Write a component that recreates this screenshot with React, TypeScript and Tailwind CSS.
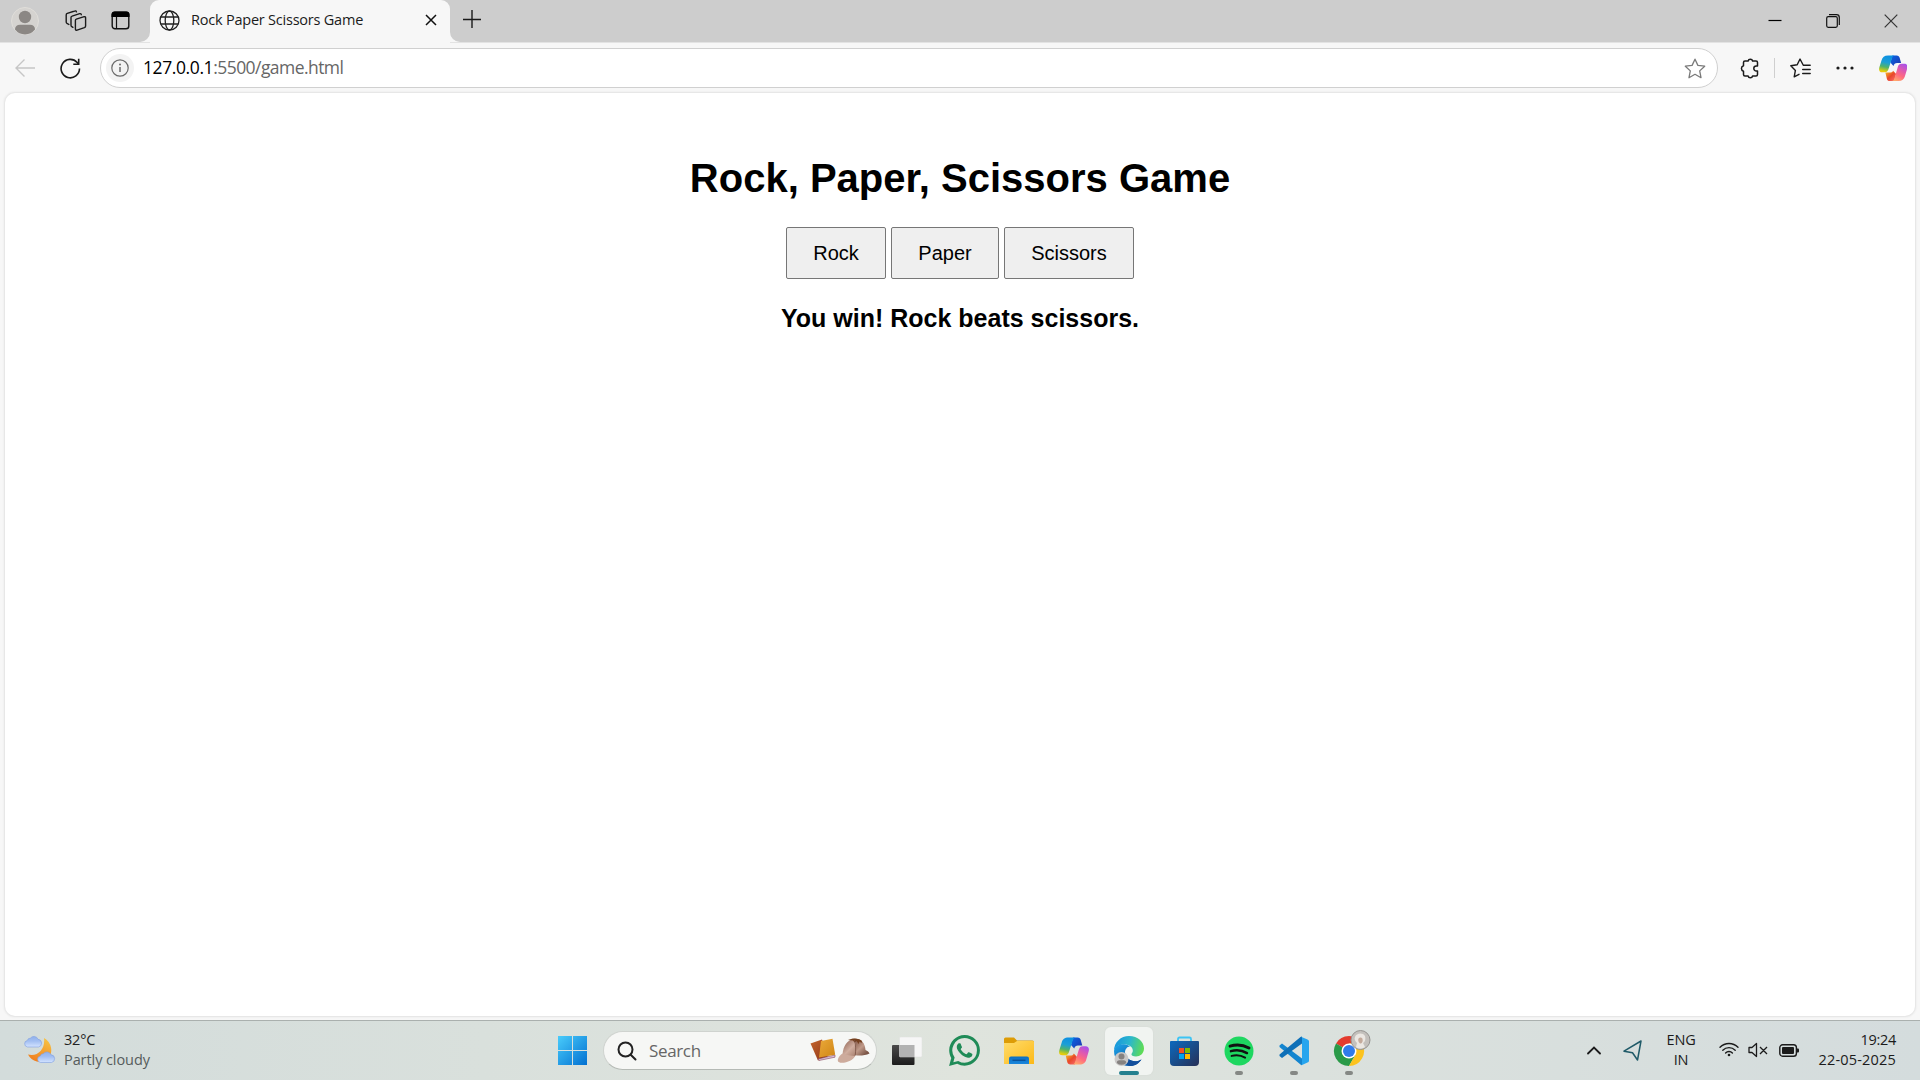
import React from "react";

const ui = "font-['Open_Sans','Noto_Sans',sans-serif]";

function CopilotLogo({ id, size }: { id: string; size: number }) {
  return (
    <svg width={size} height={size} viewBox="0 0 30 30" fill="none" className="shrink-0">
      <defs>
        <linearGradient id={id + "a"} x1="8" y1="2" x2="4" y2="21" gradientUnits="userSpaceOnUse">
          <stop stopColor="#0d91e1" />
          <stop offset=".35" stopColor="#1c9fd6" />
          <stop offset=".6" stopColor="#4fb36c" />
          <stop offset=".85" stopColor="#e5cf0a" />
          <stop offset="1" stopColor="#fbb41c" />
        </linearGradient>
        <linearGradient id={id + "b"} x1="26" y1="9" x2="16" y2="28" gradientUnits="userSpaceOnUse">
          <stop stopColor="#a050f0" />
          <stop offset=".35" stopColor="#dc58b4" />
          <stop offset=".65" stopColor="#ff6a80" />
          <stop offset="1" stopColor="#ffad6a" />
        </linearGradient>
        <linearGradient id={id + "c"} x1="14" y1="2" x2="22" y2="9" gradientUnits="userSpaceOnUse">
          <stop stopColor="#0b60e0" />
          <stop offset="1" stopColor="#1c41b8" />
        </linearGradient>
        <linearGradient id={id + "d"} x1="8" y1="20" x2="15" y2="28" gradientUnits="userSpaceOnUse">
          <stop stopColor="#f7a022" />
          <stop offset=".5" stopColor="#e8482c" />
          <stop offset="1" stopColor="#f5635c" />
        </linearGradient>
      </defs>
      <path d="M14 1.500h4.500c2 0 2.800 1 3.300 2.800L23.300 9.500H19c-2 0-3.200 1.200-3.800 3L12 9z" fill={`url(#${id}c)`} />
      <path d="M16 28.500h-4.500c-2 0-2.800-1-3.300-2.800L6.700 19.500H11c2 0 3.200-.2 3.800-2L18 21z" fill={`url(#${id}d)`} />
      <path d="M9.500 1.500h7c-1.600 0-2.300 1.300-2.900 3.200L10.300 15c-.9 3-1.800 4.300-4.300 4.300H3.500C.5 19.300-.4 17.300.3 14.200L2.700 6.500C3.700 3.200 5.500 1.500 9.500 1.500z" fill={`url(#${id}a)`} />
      <path d="M20.500 28.500h-7c1.600 0 2.300-1.300 2.900-3.200L19.700 14c.9-3 1.800-3.800 4.300-3.800h2.500c3 0 3.900 2 3.200 5.100L27.300 23.500c-1 3.300-2.800 5-6.800 5z" fill={`url(#${id}b)`} />
    </svg>
  );
}

function Avatar() {
  return (
    <svg width="28" height="28" viewBox="0 0 28 28" className="shrink-0">
      <circle cx="14" cy="14" r="13.500" fill="#d5d3d0" stroke="#e0deda" />
      <circle cx="14" cy="10" r="6.200" fill="#8b8784" />
      <path d="M4 22.500C4 19.500 6 17.700 9 17.700h10c3 0 5 1.800 5 4.800A13.500 13.500 0 0 1 14 27.500 13.500 13.500 0 0 1 4 22.500z" fill="#8b8784" />
    </svg>
  );
}

function TabStrip() {
  return (
    <header className="flex h-[43px] shrink-0 border-b border-[#e3e3e3] bg-[#cdcdcd]">
      <div className="flex h-[41px] w-[150px] shrink-0 items-center pl-[11px]">
        <Avatar />
        <svg width="22" height="22" viewBox="0 0 22 22" fill="none" stroke="#1b1b1b" strokeWidth="1.400" strokeLinejoin="round" strokeLinecap="round" className="ml-[25.500px] shrink-0">
          <path d="M11.300 9.200 19.200 6.700c.8-.2 1.400.2 1.400 1v8.400c0 .8-.4 1.300-1.200 1.600l-7.300 2.400c-1 .3-1.700-.1-1.700-1V10.600c0-.7.300-1.200.9-1.400z" />
          <path d="M7.900 17.300 6.800 16.600c-.5-.3-.8-.8-.8-1.400V7.600c0-.8.400-1.300 1.100-1.500l7.600-2.400c.9-.3 1.500.1 1.600 1" />
          <path d="M3.900 14.500 2 13.300c-.6-.4-.8-.8-.8-1.400V4.900c0-.8.4-1.200 1.100-1.500L9.700 1c.8-.3 1.500 0 1.700.8" />
        </svg>
        <svg width="19" height="19" viewBox="0 0 19 19" fill="none" className="ml-[24px] shrink-0">
          <rect x="1.200" y="1.200" width="16.600" height="16.600" rx="2.800" stroke="#111" strokeWidth="1.400" />
          <path d="M.5 6V3.500a3 3 0 0 1 3-3h12a3 3 0 0 1 3 3V6z" fill="#000" />
          <path d="M5.500 6v11.500" stroke="#111" strokeWidth="1.200" />
        </svg>
      </div>
      <div className="relative flex h-[43px] w-[300px] shrink-0 items-center rounded-t-[9px] bg-[#f7f7f7] pb-[3px] pl-[9px] pr-[13px]">
        <svg width="10" height="10" viewBox="0 0 10 10" className="absolute -left-[10px] bottom-px">
          <path d="M10 0v10H0A10 10 0 0 0 10 0z" fill="#f7f7f7" />
        </svg>
        <svg width="10" height="10" viewBox="0 0 10 10" className="absolute -right-[10px] bottom-px">
          <path d="M0 0v10h10A10 10 0 0 1 0 0z" fill="#f7f7f7" />
        </svg>
        <svg width="21" height="21" viewBox="0 0 21 21" fill="none" stroke="#222" strokeWidth="1.300" className="shrink-0">
          <circle cx="10.500" cy="10.500" r="9.500" />
          <ellipse cx="10.500" cy="10.500" rx="4.300" ry="9.500" />
          <path d="M1.700 7h17.600M1.700 14h17.600" />
        </svg>
        <span className="ml-[11px] flex-1 whitespace-nowrap text-[14.500px] leading-5 tracking-[-0.220px] text-[#1b1b1b]">Rock Paper Scissors Game</span>
        <svg width="12" height="12" viewBox="0 0 12 12" stroke="#111" strokeWidth="1.500" className="shrink-0">
          <path d="M1 1l10 10M11 1 1 11" />
        </svg>
      </div>
      <svg width="18" height="18" viewBox="0 0 18 18" stroke="#1b1b1b" strokeWidth="1.400" className="ml-[13px] mt-[10px] shrink-0">
        <path d="M9 0v18M0 9.500h18" />
      </svg>
      <div className="ml-auto flex h-[42px] items-center">
        <svg width="14" height="14" viewBox="0 0 14 14" className="mr-[44px]"><path d="M.5 6.500h13" stroke="#000" strokeWidth="1.200" /></svg>
        <svg width="14" height="14" viewBox="0 0 14 14" fill="none" stroke="#111" strokeWidth="1.200" className="mr-[44px]">
          <rect x=".7" y="2.700" width="10.600" height="10.600" rx="1.500" />
          <path d="M3 .7h7.500a2.800 2.800 0 0 1 2.800 2.800V11" />
        </svg>
        <svg width="14" height="14" viewBox="0 0 14 14" stroke="#333" strokeWidth="1.200" className="mr-[22px]"><path d="M.7.7l12.600 12.600M13.300.7.7 13.300" /></svg>
      </div>
    </header>
  );
}

function Toolbar() {
  return (
    <div className="flex h-[50px] shrink-0 items-center pl-[15px]">
      <svg width="20" height="18" viewBox="0 0 20 18" fill="none" stroke="#c6c6c6" strokeWidth="1.400" className="mb-px"><path d="M20 9H1M9.500.5 1 9l8.500 8.500" /></svg>
      <svg width="21" height="21" viewBox="0 0 21 21" fill="none" stroke="#1b1b1b" strokeWidth="1.600" className="ml-[25px]">
        <path d="M19.500 10.500A9.200 9.200 0 1 1 17.200 4.500L18.500 6" />
        <path d="M18.700.8v5.400h-5.400" />
      </svg>
      <div className="ml-[19px] flex h-10 w-[1618px] shrink-0 items-center rounded-full border border-[#d0d0d0] bg-white pl-[5px] pr-[11px]">
        <div className="flex size-7 items-center justify-center rounded-full bg-[#f3f3f3]">
          <svg width="18" height="18" viewBox="0 0 18 18" fill="none" stroke="#6b6b6b" strokeWidth="1.200">
            <circle cx="9" cy="9" r="8.200" />
            <path d="M9 8v5" strokeWidth="1.500" />
            <circle cx="9" cy="5.400" r="1" fill="#6b6b6b" stroke="none" />
          </svg>
        </div>
        <span className="mb-[2px] ml-[9px] flex-1 whitespace-nowrap text-[17.500px] leading-6 tracking-[-0.560px] text-[#666]"><span className="tracking-[-0.400px] text-black">127.0.0.1</span>:5500/game.html</span>
        <svg width="22" height="21" viewBox="0 0 22 21" fill="none" stroke="#7a7a7a" strokeWidth="1.300" strokeLinejoin="round">
          <path d="M11 1.200l2.900 6.200 6.800.8-5 4.700 1.300 6.800-6-3.400-6 3.400 1.300-6.800-5-4.700 6.800-.8z" />
        </svg>
      </div>
      <svg width="20" height="21" viewBox="0 0 20 21" fill="none" stroke="#1b1b1b" strokeWidth="1.500" strokeLinejoin="round" className="ml-[21.500px]">
        <path d="M5 3h3.100a2.300 2.300 0 0 1 4.500 0H16a1.500 1.500 0 0 1 1.500 1.500V8h-1.200a2.500 2.500 0 0 0 0 5h1.200v3.500A1.500 1.500 0 0 1 16 18h-3.400a2.300 2.300 0 0 1-4.500 0H5a1.500 1.500 0 0 1-1.500-1.500v-3.300a2.800 2.800 0 0 1 0-5.400V4.500A1.500 1.500 0 0 1 5 3z" />
      </svg>
      <div className="ml-[14.500px] h-5 w-px bg-[#cfcfcf]" />
      <svg width="21" height="20" viewBox="0 0 21 20" fill="none" stroke="#1b1b1b" strokeWidth="1.400" strokeLinejoin="round" strokeLinecap="round" className="ml-[14.500px]">
        <path d="M13.300 7.300 10 1 7.200 6.800.8 7.700l4.600 4.700-1.200 6.400L9 16.300M13.300 7.300h6.900M12.700 11.500h7.500M12.700 15.500h7.500" />
      </svg>
      <svg width="18" height="4" viewBox="0 0 18 4" fill="#1b1b1b" className="ml-[25px]"><circle cx="2" cy="2" r="1.600" /><circle cx="9" cy="2" r="1.600" /><circle cx="16" cy="2" r="1.600" /></svg>
      <div className="ml-[25px]"><CopilotLogo id="tb" size={28.5} /></div>
    </div>
  );
}

function GameButton({ children }: { children: React.ReactNode }) {
  return <button className="h-[52px] rounded-[2px] border border-[#767676] bg-[#efefef] px-[26px] text-xl leading-[23px] text-black">{children}</button>;
}

function GamePage() {
  return (
    <main className="mx-[5px] flex h-[923px] shrink-0 flex-col items-center rounded-[10px] bg-white pt-[62px] font-['Liberation_Sans',Arial,sans-serif] text-black shadow-[0_0_2px_1px_#e2e2e2]">
      <h1 className="text-[40px] font-bold leading-[46px]">Rock, Paper, Scissors Game</h1>
      <div className="mt-[26px] flex gap-[5.500px]">
        <GameButton>Rock</GameButton>
        <GameButton>Paper</GameButton>
        <GameButton>Scissors</GameButton>
      </div>
      <p className="mt-[25px] text-[25px] font-bold leading-[28px]">You win! Rock beats scissors.</p>
    </main>
  );
}

const cloudPath = "M3.500 12a3.300 3.300 0 0 1-.2-6.500 3 3 0 0 1 3-2.300 4.500 4.500 0 0 1 7.800 1.100 3.900 3.900 0 0 1 .4 7.700z";

function Weather() {
  return (
    <div className="flex w-[300px] items-center pb-[2px] pl-[24px]">
      <svg width="32" height="30" viewBox="0 0 32 30">
        <defs>
          <linearGradient id="moon" x1="22" y1="3" x2="10" y2="28" gradientUnits="userSpaceOnUse"><stop stopColor="#f7c344" /><stop offset="1" stopColor="#ef7a1c" /></linearGradient>
          <linearGradient id="cloud" x1="0" y1="0" x2="0" y2="1"><stop stopColor="#8fb0ec" /><stop offset=".45" stopColor="#a3bff2" /><stop offset="1" stopColor="#d3e3ff" /></linearGradient>
        </defs>
        <path d="M20 3a14 14 0 0 1 3.800 21.500A13.500 13.500 0 0 1 4 19.500C14 22 21.500 14 20 3z" fill="url(#moon)" />
        <path d={cloudPath} fill="url(#cloud)" stroke="#7f9fe0" strokeWidth=".6" />
        <path d={cloudPath} fill="url(#cloud)" stroke="#7f9fe0" strokeWidth=".6" transform="translate(13 15.500)" />
      </svg>
      <div className="ml-[8px] whitespace-nowrap text-[14.500px] leading-5 tracking-[-0.200px]">
        <div className="text-[#222]">32°C</div>
        <div className="tracking-[-0.080px] text-[#565c5c]">Partly cloudy</div>
      </div>
    </div>
  );
}

function SearchBox() {
  return (
    <div className="ml-[16px] flex h-[39px] w-[274px] shrink-0 items-center rounded-full border border-[#cfd3cf] border-b-[#b5bab5] bg-[#f6f7f5] pl-[13px] pr-[5px]">
      <svg width="20" height="20" viewBox="0 0 20 20" fill="none" stroke="#222" strokeWidth="2" strokeLinecap="round"><circle cx="8.500" cy="8.500" r="7" /><path d="M13.700 13.700 18.500 18.500" /></svg>
      <span className="ml-[12px] flex-1 text-[17px] leading-6 tracking-[-0.350px] text-[#666]">Search</span>
      <svg width="61" height="28" viewBox="0 0 61 28">
        <defs>
          <linearGradient id="hatL" x1="34" y1="4" x2="48" y2="18" gradientUnits="userSpaceOnUse"><stop stopColor="#94695a" /><stop offset=".5" stopColor="#d0ae9f" /><stop offset="1" stopColor="#a47b6a" /></linearGradient>
          <linearGradient id="hatR" x1="46" y1="4" x2="57" y2="16" gradientUnits="userSpaceOnUse"><stop stopColor="#8b604f" /><stop offset=".5" stopColor="#bf9a89" /><stop offset="1" stopColor="#7b5546" /></linearGradient>
          <linearGradient id="bookA" x1="0" y1="0" x2="1" y2="1"><stop stopColor="#c4652c" /><stop offset="1" stopColor="#8d3517" /></linearGradient>
          <linearGradient id="bookB" x1="0" y1="0" x2="1" y2="1"><stop stopColor="#eba93a" /><stop offset="1" stopColor="#cf8515" /></linearGradient>
        </defs>
        <path d="M.5 6.500 12 2.500l6 17-10 4z" fill="url(#bookA)" />
        <path d="M8 22 25 18v2.200L9 23.500z" fill="#d7bfd6" stroke="#8a4a60" strokeWidth=".6" />
        <path d="M11 4 22.500 1.700l2.700 16L9 20.500z" fill="url(#bookB)" />
        <path d="M44 2C51 1 55 6 55.500 13c2 .8 3.500 2 4 3.500-4 1.800-9 2.500-14.500 1.800z" fill="url(#hatR)" />
        <path d="M32.500 17.500C33 9.500 37 2.500 44.500 1.700 46 7 46.500 13 45 19.500c-4 1-9 .5-12.500-2z" fill="url(#hatL)" />
        <path d="M38 3c4-2.300 11-2.300 14 1l-.5 2-2-1.500-.8 2.500-2.200-3-2 1.500-1.500-2z" fill="#75401f" />
        <path d="M32.500 16.500c4 1.800 8.500 2.300 12.500 2.500-1 3.500-8 7-13.500 6.800-3.500-.2-4.300-2-3.300-4.300.8-2 2.300-3.800 4.300-5z" fill="#cdab9c" />
        <path d="M44.500 3c1.300 5 1.500 11 .7 15.500" stroke="#775142" strokeWidth=".8" fill="none" />
      </svg>
    </div>
  );
}

function AppSlot({ children, active, running }: { children: React.ReactNode; active?: boolean; running?: boolean }) {
  return (
    <div className={"relative flex size-12 shrink-0 items-center justify-center rounded-md " + (active ? "bg-[#f1f4f1] shadow-[0_0_1px_1px_#dadfda]" : "")}>
      {children}
      {active && <span className="absolute bottom-0 left-[14px] h-1 w-5 rounded-full bg-[#24808f]" />}
      {running && <span className="absolute bottom-0 left-5 h-1 w-2 rounded-full bg-[#858885]" />}
    </div>
  );
}

function Apps() {
  return (
    <div className="ml-[7px] flex gap-[7px]">
      <div className="mr-[1px]">
        <AppSlot>
          <svg width="30" height="28" viewBox="0 0 30 28" className="mr-[2px]">
            <defs><linearGradient id="tv" x1="0" y1="0" x2="0" y2="1"><stop stopColor="#4a4a4a" /><stop offset="1" stopColor="#1c1c1c" /></linearGradient></defs>
            <rect x="0" y="8" width="22.500" height="20" rx="1" fill="url(#tv)" />
            <rect x="7.500" y="0" width="22.500" height="20" rx="1" fill="#f6f6f6" stroke="#dedede" strokeWidth=".5" />
            <path d="M7.500 8h15v12h-14a1 1 0 0 1-1-1z" fill="#b2b2b2" />
          </svg>
        </AppSlot>
      </div>
      <AppSlot>
        <svg width="31" height="31" viewBox="0 0 24 24" fill="#1f8b57">
          <path d="M17.472 14.382c-.297-.149-1.758-.867-2.030-.967-.273-.099-.471-.148-.670.150-.197.297-.767.966-.940 1.164-.173.199-.347.223-.644.075-.297-.150-1.255-.463-2.390-1.475-.883-.788-1.480-1.761-1.653-2.059-.173-.297-.018-.458.130-.606.134-.133.298-.347.446-.520.149-.174.198-.298.298-.497.099-.198.050-.371-.025-.520-.075-.149-.669-1.612-.916-2.207-.242-.579-.487-.500-.669-.510-.173-.008-.371-.010-.570-.010-.198 0-.520.074-.792.372-.272.297-1.040 1.016-1.040 2.479 0 1.462 1.065 2.875 1.213 3.074.149.198 2.096 3.200 5.077 4.487.709.306 1.262.489 1.694.625.712.227 1.360.195 1.871.118.571-.085 1.758-.719 2.006-1.413.248-.694.248-1.289.173-1.413-.074-.124-.272-.198-.570-.347z" />
          <path d="M12.050 0C5.495 0 .160 5.335.157 11.892c0 2.096.547 4.142 1.588 5.945L.057 24l6.305-1.654a11.882 11.882 0 0 0 5.683 1.448h.005c6.554 0 11.890-5.335 11.893-11.893A11.821 11.821 0 0 0 12.050 0zm0 2.300a9.600 9.600 0 0 1 9.600 9.600 9.600 9.600 0 0 1-14.500 8.200l-3.800 1 1-3.700A9.600 9.600 0 0 1 12.050 2.300z" fillRule="evenodd" />
        </svg>
      </AppSlot>
      <AppSlot>
        <svg width="30" height="27" viewBox="0 0 30 27">
          <defs>
            <linearGradient id="fold" x1="0" y1="0" x2="1" y2="1"><stop stopColor="#ffdc6b" /><stop offset="1" stopColor="#fcb918" /></linearGradient>
            <linearGradient id="pocket" x1="0" y1="0" x2="0" y2="1"><stop stopColor="#0b6fc2" /><stop offset="1" stopColor="#1a86dc" /></linearGradient>
          </defs>
          <path d="M0 2a1.500 1.500 0 0 1 1.500-1.500H10l3 3h15.500A1.500 1.500 0 0 1 30 5v4H0z" fill="#dd9c06" />
          <path d="M0 6h10l3-2h16a1 1 0 0 1 1 1v22H0z" fill="url(#fold)" />
          <path d="M5 27v-5.500a2 2 0 0 1 2-2h16a2 2 0 0 1 2 2V27z" fill="url(#pocket)" />
          <path d="M8.500 23.200h13" stroke="#08498f" strokeWidth="1.200" />
        </svg>
      </AppSlot>
      <AppSlot><CopilotLogo id="bar" size={30} /></AppSlot>
      <AppSlot active>
        <svg width="32" height="32" viewBox="0 0 32 32">
          <defs>
            <linearGradient id="eA" x1="2" y1="6" x2="30" y2="14" gradientUnits="userSpaceOnUse"><stop stopColor="#1796dd" /><stop offset=".5" stopColor="#2cb7cc" /><stop offset="1" stopColor="#5fdc55" /></linearGradient>
            <linearGradient id="eB" x1="4" y1="10" x2="18" y2="30" gradientUnits="userSpaceOnUse"><stop stopColor="#1c9fe4" /><stop offset="1" stopColor="#0b58a8" /></linearGradient>
          </defs>
          <path d="M1 16C1 7 8 1 16 1c9 0 15 6 15 12.500 0 5-4 8-8 8-3 0-5-1-4.500-2.500.5-1 1.300-1.700 1.300-3.500 0-3.500-3.800-6-8.300-6C6 9.500 2 12 1 16z" fill="url(#eA)" />
          <path d="M1 16c.5-4 4.500-7 9.500-6.800 3 .1 5 1 6.500 2.300-3 0-5 3-5 6 0 5 5 8.700 10 8.700 3 0 5-1 6.500-1.800C26 28 22 31 16 31 8 31 1 25 1 16z" fill="url(#eB)" />
          <path d="M12 17.500c0 5 5 8.700 10 8.700 3 0 5-1 6.500-1.800C26 28 22 31 17.500 31 11 30 8.500 22 12 17.500z" fill="#124f9b" />
          <circle cx="8.500" cy="24" r="7" fill="#c9c8c7" />
          <circle cx="8.500" cy="21.500" r="3" fill="#858280" />
          <path d="M3.800 28c0-2 1-2.800 2.500-2.800h4.500c1.500 0 2.500.8 2.500 2.800a7 7 0 0 1-9.500 0z" fill="#858280" />
        </svg>
      </AppSlot>
      <AppSlot>
        <svg width="29" height="30" viewBox="0 0 29 30">
          <defs><linearGradient id="store" x1="4" y1="5" x2="26" y2="30" gradientUnits="userSpaceOnUse"><stop stopColor="#0d66b8" /><stop offset="1" stopColor="#26335c" /></linearGradient></defs>
          <path d="M8 7V3a1.500 1.500 0 0 1 1.500-1.500h10A1.500 1.500 0 0 1 21 3v4" fill="none" stroke="#3cc4f4" strokeWidth="1.800" />
          <path d="M0 6a1 1 0 0 1 1-1h27a1 1 0 0 1 1 1v20a4 4 0 0 1-4 4H4a4 4 0 0 1-4-4z" fill="url(#store)" />
          <path d="M9 12h5v5H9z" fill="#f25022" /><path d="M15 12h5v5h-5z" fill="#7fba00" />
          <path d="M9 18h5v5H9z" fill="#00a4ef" /><path d="M15 18h5v5h-5z" fill="#ffb900" />
        </svg>
      </AppSlot>
      <AppSlot running>
        <svg width="30" height="30" viewBox="0 0 30 30" fill="none" stroke="#111" strokeLinecap="round">
          <circle cx="15" cy="15" r="14.500" fill="#1ed760" stroke="none" />
          <path d="M6 10.200c6-1.800 13.500-1.200 19 1.900" strokeWidth="2.900" />
          <path d="M6.900 15.200c5.300-1.500 11.300-.9 16.100 1.900" strokeWidth="2.400" />
          <path d="M7.600 19.900c4.600-1.200 9.400-.7 13.500 1.700" strokeWidth="2" />
        </svg>
      </AppSlot>
      <AppSlot running>
        <svg width="30" height="30" viewBox="0 0 30 30">
          <path d="M.5 9.500 3 7.500 23 22.500V29a2 2 0 0 1-1.500-.5L.5 11z" fill="#1485cf" />
          <path d="M.5 20 3 22 23 7.500V.5a2 2 0 0 0-1.500.5L.5 18.500z" fill="#0e70b8" />
          <path d="M22 .7 28.500 3.500A2 2 0 0 1 30 5.500v19a2 2 0 0 1-1.500 2L22 29.500c.6-.3 1-1 1-1.500V2c0-.6-.4-1-1-1.300z" fill="#27a5ee" />
        </svg>
      </AppSlot>
      <AppSlot running>
        <svg width="38" height="38" viewBox="0 0 38 38" className="mb-[6px] ml-[6px] shrink-0">
          <path d="M16 22 3 14.500A15 15 0 0 1 29 14.500H16z" fill="#e33b2e" />
          <path d="M16 22 3 14.500A15 15 0 0 0 16 37l6.500-11.200z" fill="#2a9a48" />
          <path d="M16 14.500h13A15 15 0 0 1 16 37l6.500-11.200z" fill="#fcc31e" />
          <circle cx="16" cy="22" r="7.500" fill="#fff" /><circle cx="16" cy="22" r="6" fill="#2f7bea" />
          <circle cx="27.500" cy="11" r="9.500" fill="#c3c0bc" stroke="#969491" />
          <path d="M22 8c1-4 8-5 10-1 1 3 0 6-2 7l2 4c-3 2-7 2-9 0l1-4c-2-2-3-4-2-6z" fill="#ebe7e2" />
          <path d="M25.500 9.500c1.500-1.500 3.500-1 4 .5s0 4-1.500 4.500-3.500-2.500-2.500-5z" fill="#c4aa9b" />
        </svg>
      </AppSlot>
    </div>
  );
}

function Tray() {
  return (
    <div className="ml-auto flex items-center whitespace-nowrap text-[14.500px] leading-5 text-[#1b1b1b]">
      <svg width="14" height="9" viewBox="0 0 14 9" fill="none" stroke="#1b1b1b" strokeWidth="1.800" strokeLinecap="round"><path d="M1 7.500 7 1.500l6 6" /></svg>
      <svg width="19" height="21" viewBox="0 0 19 21" fill="none" stroke="#1f5a68" strokeWidth="1.500" strokeLinejoin="round" className="ml-[22.500px]"><path d="M18 1 1 11.200l8.500 1.600L14.500 20z" /></svg>
      <div className="mb-[2px] ml-[23px] w-[32px] text-center tracking-[-0.200px]"><div>ENG</div><div>IN</div></div>
      <svg width="20" height="15" viewBox="0 0 20 15" fill="none" stroke="#1b1b1b" strokeWidth="1.400" strokeLinecap="round" className="mb-[2px] ml-[21.500px]">
        <path d="M1 5.200a12.700 12.700 0 0 1 18 0M3.800 8.200a8.800 8.800 0 0 1 12.400 0M6.600 10.900a4.800 4.800 0 0 1 6.800 0" /><circle cx="10" cy="13" r="1.300" fill="#1b1b1b" stroke="none" />
      </svg>
      <svg width="20" height="16" viewBox="0 0 20 16" fill="none" stroke="#1b1b1b" strokeWidth="1.300" strokeLinejoin="round" className="mb-px ml-[9px]">
        <path d="M1 5.500h3L8.500 1.500v13L4 10.500H1zM12 5l7 7M19 5l-7 7" />
      </svg>
      <svg width="21" height="13" viewBox="0 0 21 13" className="mb-px ml-[11px]">
        <rect x=".8" y=".8" width="16.600" height="11.400" rx="2.800" fill="none" stroke="#1b1b1b" strokeWidth="1.400" />
        <rect x="3" y="3" width="12" height="7" rx="1" fill="#1b1b1b" /><path d="M18 4.500h1a1 1 0 0 1 1 1v2a1 1 0 0 1-1 1h-1z" fill="#1b1b1b" />
      </svg>
      <div className="mb-[2px] ml-[19px] mr-[24px] text-right"><div className="tracking-[-0.300px]">19:24</div><div className="tracking-[0.180px]">22-05-2025</div></div>
    </div>
  );
}

function Taskbar() {
  return (
    <footer className="mt-auto flex h-[60px] shrink-0 items-center border-t border-[#aab0ae] bg-linear-to-r from-[#d3dcdb] via-[#dfe4dd] to-[#d4dcdd]">
      <Weather />
      <svg width="29" height="29" viewBox="0 0 29 29" className="ml-[258px] shrink-0">
        <defs><linearGradient id="win" x1="0" y1="0" x2="29" y2="29" gradientUnits="userSpaceOnUse"><stop stopColor="#49ccfb" /><stop offset="1" stopColor="#0270d1" /></linearGradient></defs>
        <path d="M0 0h14v14H0zM15 0h14v14H15zM0 15h14v14H0zM15 15h14v14H15z" fill="url(#win)" />
      </svg>
      <SearchBox />
      <Apps />
      <Tray />
    </footer>
  );
}

export default function App() {
  return (
    <div className={"flex h-[1080px] w-[1920px] flex-col overflow-hidden bg-[#f7f7f7] " + ui}>
      <TabStrip />
      <Toolbar />
      <GamePage />
      <Taskbar />
    </div>
  );
}
